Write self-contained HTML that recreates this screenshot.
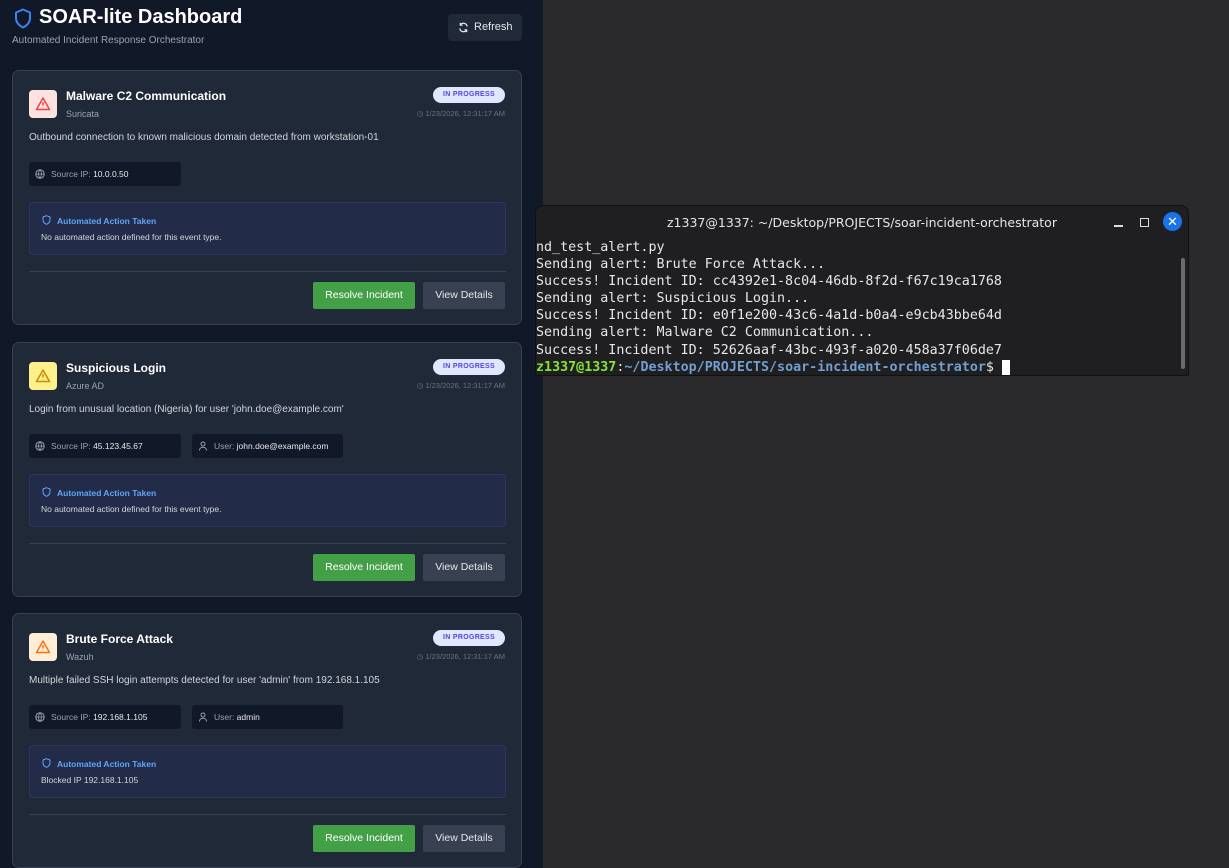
<!DOCTYPE html>
<html><head><meta charset="utf-8"><style>
*{box-sizing:border-box;margin:0;padding:0}
body{width:1229px;height:868px;overflow:hidden;background:#2a2a2c;font-family:"Liberation Sans",sans-serif;position:relative}
#left{position:absolute;left:0;top:0;width:543px;height:868px;background:#111827;overflow:hidden}
h1{position:absolute;left:39px;top:6px;font-size:20px;color:#fff;font-weight:bold}
.sub{position:absolute;left:12px;top:35px;font-size:10px;color:#9ca3af}
.refresh{position:absolute;left:448px;top:14px;width:74px;height:27px;background:#1f2937;border-radius:4px;color:#e5e7eb;font-size:11px;line-height:27px;padding-left:26px}
.card{position:absolute;left:12px;width:510px;height:255px;background:#1f2937;border:1px solid #374151;border-radius:7px}
.ic{position:absolute;left:16px;top:19px;width:28px;height:28px;border-radius:4px}
.t{position:absolute;left:53px;top:18px;font-size:12px;font-weight:bold;color:#fff}
.src{position:absolute;left:53px;top:38px;font-size:9px;color:#9ca3af}
.badge{position:absolute;right:16px;top:16px;width:72px;height:16px;border-radius:8px;background:#e0e7ff;color:#4f46e5;font-size:7px;font-weight:bold;text-align:center;line-height:16px;letter-spacing:.3px}
.ts{position:absolute;right:16px;top:38px;font-size:7.5px;color:#6b7280}
.d{position:absolute;left:16px;top:61px;font-size:10px;color:#d1d5db}
.chip{position:absolute;top:91px;height:24px;background:#111827;border-radius:3px;font-size:8.5px;color:#9ca3af;line-height:24px;padding-left:22px;width:152px}
.chip b{color:#e5e7eb;font-weight:normal}
.chip svg{position:absolute;left:6px;top:7px}
.act{position:absolute;left:16px;top:131px;width:477px;height:53px;background:#222c48;border:1px solid #2b3760;border-radius:4px}
.act .h{position:absolute;left:27px;top:13px;font-size:8.5px;font-weight:bold;color:#60a5fa}
.act .m{position:absolute;left:11px;top:29px;font-size:8.5px;color:#d1d5db}
.act svg{position:absolute;left:12px;top:12px}
.hr{position:absolute;left:16px;top:200px;width:477px;height:1px;background:#374151}
.btn{position:absolute;top:211px;height:27px;line-height:27px;font-size:10.5px;text-align:center;border-radius:2px}
.res{left:300px;width:102px;background:#43a047;color:#fff}
.vd{left:410px;width:82px;background:#374151;color:#e5e7eb}
#term{position:absolute;left:535px;top:205px;width:654px;height:171px;background:#1f1f21;border-radius:8px 8px 2px 2px;border:1px solid #111}
#term .tt{position:absolute;left:0;right:0;top:9px;text-align:center;color:#e5e5e5;font-size:12.5px;font-family:"DejaVu Sans",sans-serif}
pre{position:absolute;left:0;top:33px;font-family:"DejaVu Sans Mono","Liberation Mono",monospace;font-size:13.35px;line-height:17.1px;color:#e8e8e8}
.g{color:#8ae234;font-weight:bold}.bl{color:#729fcf;font-weight:bold}
</style></head><body>
<div id="left">
<svg style="position:absolute;left:14px;top:8px" width="18" height="21" viewBox="0 0 18 21"><path d="M9 1.5 L16 4.5 V10 C16 14.5 13 17.5 9 19.5 C5 17.5 2 14.5 2 10 V4.5 Z" fill="none" stroke="#3b82f6" stroke-width="2" stroke-linejoin="round"/></svg>
<h1>SOAR-lite Dashboard</h1>
<div class="sub">Automated Incident Response Orchestrator</div>
<div class="refresh"><svg style="position:absolute;left:10px;top:8px" width="11" height="11" viewBox="0 0 12 12"><path d="M10 5A4 4 0 0 0 2.5 3.5M2 7a4 4 0 0 0 7.5 1.5M2.5 1v2.5H5M9.5 11V8.5H7" fill="none" stroke="#e5e7eb" stroke-width="1.3"/></svg>Refresh</div>

<div class="card" style="top:70px">
<div class="ic" style="background:#fee2e2"><svg width="28" height="28" viewBox="0 0 28 28"><path d="M14 8 L20.5 19.5 H7.5 Z" fill="none" stroke="#ef4444" stroke-width="1.5" stroke-linejoin="round"/><path d="M14 12v3.5M14 17.3v.3" stroke="#ef4444" stroke-width="1.5"/></svg></div>
<div class="t">Malware C2 Communication</div><div class="src">Suricata</div>
<div class="badge">IN PROGRESS</div><div class="ts">◷ 1/23/2026, 12:31:17 AM</div>
<div class="d">Outbound connection to known malicious domain detected from workstation-01</div>
<div class="chip" style="left:16px"><svg width="10" height="10" viewBox="0 0 10 10"><circle cx="5" cy="5" r="4.2" fill="none" stroke="#9ca3af"/><path d="M1 5h8M5 .8c-2 2.5-2 5.9 0 8.4M5 .8c2 2.5 2 5.9 0 8.4" fill="none" stroke="#9ca3af" stroke-width=".8"/></svg>Source IP: <b>10.0.0.50</b></div>
<div class="act"><svg width="9" height="10" viewBox="0 0 9 10"><path d="M4.5.7 8 2v2.7C8 7 6.5 8.5 4.5 9.3 2.5 8.5 1 7 1 4.7V2Z" fill="none" stroke="#60a5fa"/></svg><div class="h">Automated Action Taken</div><div class="m">No automated action defined for this event type.</div></div>
<div class="hr"></div><div class="btn res">Resolve Incident</div><div class="btn vd">View Details</div>
</div>

<div class="card" style="top:342px">
<div class="ic" style="background:#fef08a"><svg width="28" height="28" viewBox="0 0 28 28"><path d="M14 8 L20.5 19.5 H7.5 Z" fill="none" stroke="#ca8a04" stroke-width="1.5" stroke-linejoin="round"/><path d="M14 12v3.5M14 17.3v.3" stroke="#ca8a04" stroke-width="1.5"/></svg></div>
<div class="t">Suspicious Login</div><div class="src">Azure AD</div>
<div class="badge">IN PROGRESS</div><div class="ts">◷ 1/23/2026, 12:31:17 AM</div>
<div class="d">Login from unusual location (Nigeria) for user 'john.doe@example.com'</div>
<div class="chip" style="left:16px"><svg width="10" height="10" viewBox="0 0 10 10"><circle cx="5" cy="5" r="4.2" fill="none" stroke="#9ca3af"/><path d="M1 5h8M5 .8c-2 2.5-2 5.9 0 8.4M5 .8c2 2.5 2 5.9 0 8.4" fill="none" stroke="#9ca3af" stroke-width=".8"/></svg>Source IP: <b>45.123.45.67</b></div>
<div class="chip" style="left:179px;width:151px"><svg width="10" height="10" viewBox="0 0 10 10"><circle cx="5" cy="3" r="2" fill="none" stroke="#9ca3af"/><path d="M1.5 9.5c0-2 1.5-3.2 3.5-3.2s3.5 1.2 3.5 3.2" fill="none" stroke="#9ca3af"/></svg>User: <b>john.doe@example.com</b></div>
<div class="act"><svg width="9" height="10" viewBox="0 0 9 10"><path d="M4.5.7 8 2v2.7C8 7 6.5 8.5 4.5 9.3 2.5 8.5 1 7 1 4.7V2Z" fill="none" stroke="#60a5fa"/></svg><div class="h">Automated Action Taken</div><div class="m">No automated action defined for this event type.</div></div>
<div class="hr"></div><div class="btn res">Resolve Incident</div><div class="btn vd">View Details</div>
</div>

<div class="card" style="top:613px">
<div class="ic" style="background:#ffedd5"><svg width="28" height="28" viewBox="0 0 28 28"><path d="M14 8 L20.5 19.5 H7.5 Z" fill="none" stroke="#f97316" stroke-width="1.5" stroke-linejoin="round"/><path d="M14 12v3.5M14 17.3v.3" stroke="#f97316" stroke-width="1.5"/></svg></div>
<div class="t">Brute Force Attack</div><div class="src">Wazuh</div>
<div class="badge">IN PROGRESS</div><div class="ts">◷ 1/23/2026, 12:31:17 AM</div>
<div class="d">Multiple failed SSH login attempts detected for user 'admin' from 192.168.1.105</div>
<div class="chip" style="left:16px"><svg width="10" height="10" viewBox="0 0 10 10"><circle cx="5" cy="5" r="4.2" fill="none" stroke="#9ca3af"/><path d="M1 5h8M5 .8c-2 2.5-2 5.9 0 8.4M5 .8c2 2.5 2 5.9 0 8.4" fill="none" stroke="#9ca3af" stroke-width=".8"/></svg>Source IP: <b>192.168.1.105</b></div>
<div class="chip" style="left:179px;width:151px"><svg width="10" height="10" viewBox="0 0 10 10"><circle cx="5" cy="3" r="2" fill="none" stroke="#9ca3af"/><path d="M1.5 9.5c0-2 1.5-3.2 3.5-3.2s3.5 1.2 3.5 3.2" fill="none" stroke="#9ca3af"/></svg>User: <b>admin</b></div>
<div class="act"><svg width="9" height="10" viewBox="0 0 9 10"><path d="M4.5.7 8 2v2.7C8 7 6.5 8.5 4.5 9.3 2.5 8.5 1 7 1 4.7V2Z" fill="none" stroke="#60a5fa"/></svg><div class="h">Automated Action Taken</div><div class="m">Blocked IP 192.168.1.105</div></div>
<div class="hr"></div><div class="btn res">Resolve Incident</div><div class="btn vd">View Details</div>
</div>
</div>

<div id="term">
<div class="tt">z1337@1337: ~/Desktop/PROJECTS/soar-incident-orchestrator</div>
<div style="position:absolute;left:578px;top:19px;width:9px;height:1.5px;background:#ddd"></div>
<div style="position:absolute;left:604px;top:12px;width:9px;height:9px;border:1.3px solid #ddd"></div>
<div style="position:absolute;left:627px;top:6px;width:19px;height:19px;border-radius:50%;background:#1a73e8;color:#fff;font-size:13px;line-height:19px;text-align:center">✕</div>
<div style="position:absolute;left:645px;top:52px;width:4px;height:111px;border-radius:2px;background:#6b6b6b"></div>
<pre>nd_test_alert.py
Sending alert: Brute Force Attack...
Success! Incident ID: cc4392e1-8c04-46db-8f2d-f67c19ca1768
Sending alert: Suspicious Login...
Success! Incident ID: e0f1e200-43c6-4a1d-b0a4-e9cb43bbe64d
Sending alert: Malware C2 Communication...
Success! Incident ID: 52626aaf-43bc-493f-a020-458a37f06de7
<span class="g">z1337@1337</span>:<span class="bl">~/Desktop/PROJECTS/soar-incident-orchestrator</span>$ <span style="background:#fff">&nbsp;</span></pre>
</div>
</body></html>
